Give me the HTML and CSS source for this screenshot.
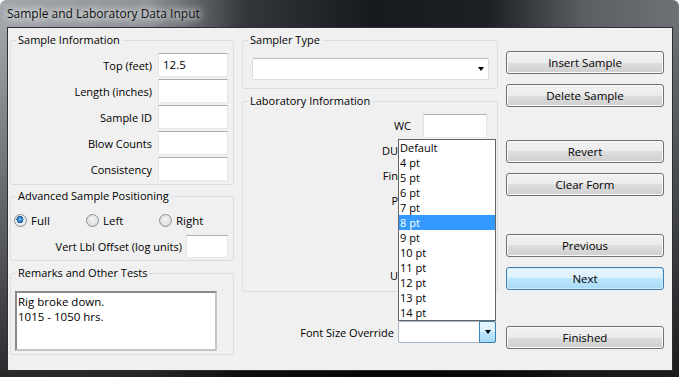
FILE: index.html
```html
<!DOCTYPE html>
<html lang="en">
<head>
    <meta charset="UTF-8">
    <title>Sample and Laboratory Data Input</title>
    <link rel="stylesheet" href="styles.css">
</head>
<body>

    <div class="window">
        <!-- Title bar -->
        <div class="titlebar">
            <span class="title">Sample and Laboratory Data Input</span>
        </div>

        <div class="client">

            <!-- Left column -->
            <div class="col col-left">
                <fieldset class="group group-sample">
                    <legend>Sample Information</legend>
                    <div class="field"><span class="lbl">Top (feet)</span><span class="text w70">12.5</span></div>
                    <div class="field"><span class="lbl">Length (inches)</span><span class="text w70"></span></div>
                    <div class="field"><span class="lbl">Sample ID</span><span class="text w70"></span></div>
                    <div class="field"><span class="lbl">Blow Counts</span><span class="text w70"></span></div>
                    <div class="field"><span class="lbl">Consistency</span><span class="text w70"></span></div>
                </fieldset>

                <fieldset class="group group-position">
                    <legend>Advanced Sample Positioning</legend>
                    <div class="radios">
                        <span class="radio-item"><span class="radio checked"></span>Full</span>
                        <span class="radio-item"><span class="radio"></span>Left</span>
                        <span class="radio-item"><span class="radio"></span>Right</span>
                    </div>
                    <div class="field field-offset"><span class="lbl">Vert Lbl Offset (log units)</span><span class="text w42"></span></div>
                </fieldset>

                <fieldset class="group group-remarks">
                    <legend>Remarks and Other Tests</legend>
                    <div class="memo">Rig broke down.<br>1015 - 1050 hrs.</div>
                </fieldset>
            </div>

            <!-- Middle column -->
            <div class="col col-mid">
                <fieldset class="group group-sampler">
                    <legend>Sampler Type</legend>
                    <div class="combo combo-sampler"><span class="arrow"></span></div>
                </fieldset>

                <fieldset class="group group-lab">
                    <legend>Laboratory Information</legend>
                    <div class="lab-row"><span class="lbl">WC</span><span class="text w64"></span></div>
                    <!-- rows below sit under the open list, only the start of each label shows -->
                    <div class="lab-row covered"><span class="lbl">DU</span><span class="text w64"></span></div>
                    <div class="lab-row covered"><span class="lbl">Fin</span><span class="text w64"></span></div>
                    <div class="lab-row covered"><span class="lbl">P</span><span class="text w64"></span></div>
                    <div class="lab-row covered"><span class="lbl"></span><span class="text w64"></span></div>
                    <div class="lab-row covered"><span class="lbl"></span><span class="text w64"></span></div>
                    <div class="lab-row covered"><span class="lbl">U</span><span class="text w64"></span></div>
                </fieldset>

                <div class="font-row">
                    <span class="lbl">Font Size Override</span>
                    <div class="combo combo-font">
                        <span class="combo-btn"><span class="arrow"></span></span>
                        <!-- Open drop-down list -->
                        <ul class="droplist">
                            <li>Default</li>
                            <li>4 pt</li>
                            <li>5 pt</li>
                            <li>6 pt</li>
                            <li>7 pt</li>
                            <li class="selected">8 pt</li>
                            <li>9 pt</li>
                            <li>10 pt</li>
                            <li>11 pt</li>
                            <li>12 pt</li>
                            <li>13 pt</li>
                            <li>14 pt</li>
                        </ul>
                    </div>
                </div>
            </div>

            <!-- Right column -->
            <div class="col col-right">
                <div class="btn">Insert Sample</div>
                <div class="btn">Delete Sample</div>
                <div class="btn gap-lg">Revert</div>
                <div class="btn">Clear Form</div>
                <div class="btn gap-xl">Previous</div>
                <div class="btn default">Next</div>
                <div class="btn gap-lg2">Finished</div>
            </div>

        </div>
    </div>

</body>
</html>
```

FILE: styles.css
```css
/* Page */
body {
    margin: 0;
    padding: 0;
    width: 679px;
    height: 377px;
    overflow: hidden;
    font-family: 'Open Sans', 'Noto Sans', sans-serif;
    font-size: 11px;
    color: #000;
}

/* Aero glass frame */
.window {
    width: 679px;
    height: 377px;
    display: flex;
    flex-direction: column;
    background:
        linear-gradient(to bottom, rgba(0, 0, 0, 0) 20px, rgba(0, 0, 0, 0.75) 100%),
        linear-gradient(to right, #a3a7ab 0, #8f9398 22%, #33363a 36%, #16191d 55%, #1d2024 72%, #5b5f64 86%, #6e7277 100%);
    border-radius: 6px 6px 0 0;
}

.titlebar {
    height: 27px;
    display: flex;
    align-items: center;
    padding-left: 7px;
    flex-shrink: 0;
}

.title {
    font-size: 12px;
    color: #101010;
    padding: 0 6px 1px 0;
    text-shadow: 0 0 6px rgba(255, 255, 255, 0.9), 0 0 10px rgba(255, 255, 255, 0.8), 0 0 14px rgba(255, 255, 255, 0.6);
}

/* Client area */
.client {
    flex: 1;
    margin: 0 6px 6px 7px;
    border: 1px solid #2c2f33;
    background-color: #f0f0f0;
    display: flex;
    padding-top: 4px;
}

.col {
    display: flex;
    flex-direction: column;
}

.col-left {
    width: 224px;
    margin-left: 2px;
}

.col-mid {
    width: 256px;
    margin-left: 8px;
}

.col-right {
    width: 158px;
    margin-left: 8px;
    padding-top: 19px;
}

/* Group boxes */
.group {
    margin: 0;
    border: 1px solid #d5dfe5;
    border-radius: 3px;
    min-width: 0;
}

.group legend {
    padding: 0 2px;
    margin-left: 5px;
    line-height: 16px;
    height: 16px;
}

.group-sample {
    padding: 5px 5px 3px 0;
    display: flex;
    flex-direction: column;
    gap: 2px;
}

.group-position {
    margin-top: 3px;
    padding: 8px 5px 2px 3px;
}

.group-position legend {
    margin-left: 2px;
}

.group-remarks {
    margin-top: 4px;
    padding: 10px 5px 3px 4px;
}

.group-remarks legend {
    margin-left: 1px;
}

.group-sampler {
    padding: 10px 7px 8px 9px;
}

.group-sampler legend {
    margin-left: -4px;
}

.group-lab {
    margin-top: 4px;
    padding: 4px 10px 3px 0;
}

/* Labelled fields */
.field {
    display: flex;
    justify-content: flex-end;
    align-items: center;
    gap: 6px;
}

.field-offset {
    margin-top: 7px;
    gap: 4px;
}

.lbl {
    white-space: nowrap;
}

.text {
    display: block;
    height: 24px;
    box-sizing: border-box;
    background-color: #fff;
    border: 1px solid #e2e3ea;
    border-top-color: #abadb3;
    border-bottom-color: #e3e9ef;
    padding: 3px 4px;
    line-height: 16px;
    font-size: 11.5px;
}

.w70 { width: 70px; }
.w42 { width: 42px; height: 23px; }
.w64 { width: 64px; }

/* Radio buttons */
.radios {
    display: grid;
    grid-template-columns: 72px 73px auto;
    height: 16px;
    align-items: center;
}

.radio-item {
    display: flex;
    align-items: center;
    gap: 4px;
    font-size: 11.5px;
}

.radio {
    width: 11px;
    height: 11px;
    border: 1px solid #8d8f92;
    border-radius: 50%;
    background: radial-gradient(circle at 50% 40%, #f6f6f6 0, #e2e2e2 55%, #cfd0d1 100%);
}

.radio.checked {
    background:
        radial-gradient(circle at 45% 40%, #a9dcff 0, #3e8fd6 1.5px, #1b5a98 3.5px, rgba(0, 0, 0, 0) 3.6px),
        radial-gradient(circle, #f6f6f6 0, #e0e0e0 100%);
}

/* Memo box */
.memo {
    width: 202px;
    height: 60px;
    box-sizing: border-box;
    background-color: #fff;
    border: 2px solid;
    border-color: #8a8a8a #c6c6c6 #c6c6c6 #8a8a8a;
    padding: 1px 1px;
    line-height: 15px;
    font-size: 11.5px;
}

/* Combo boxes */
.combo {
    position: relative;
    height: 22px;
    box-sizing: border-box;
    background-color: #fff;
    border: 1px solid #d9dde2;
    border-top-color: #b7bcc2;
    border-radius: 2px;
}

.combo-sampler {
    width: 237px;
}

.arrow {
    position: absolute;
    top: 8px;
    right: 4px;
    width: 0;
    height: 0;
    border-left: 3.5px solid transparent;
    border-right: 3.5px solid transparent;
    border-top: 4px solid #000;
}

.combo-font {
    width: 98px;
    border-color: #a9b8c6;
}

.combo-btn {
    position: absolute;
    top: -1px;
    right: -1px;
    width: 17px;
    height: 22px;
    box-sizing: border-box;
    border: 1px solid #3c7fb1;
    border-radius: 0 2px 2px 0;
    background: linear-gradient(#e8f5fd 0%, #d8effc 50%, #bde6fd 50%, #a6d9f4 100%);
}

.combo-btn .arrow {
    top: 8px;
    right: 4px;
}

/* Drop-down list */
.droplist {
    position: absolute;
    left: -1px;
    bottom: 100%;
    width: 98px;
    margin: 0 0 1px 0;
    padding: 0;
    list-style-type: none;
    background-color: #fff;
    border: 1px solid #646464;
    box-sizing: border-box;
}

.droplist li {
    height: 15px;
    line-height: 15px;
    padding-left: 1px;
    font-size: 11px;
}

.droplist li.selected {
    background-color: #3399ff;
    color: #fff;
}

/* Laboratory rows */
.lab-row {
    height: 25px;
    display: flex;
    justify-content: flex-end;
    align-items: center;
    gap: 12px;
}

/* labels end where the open list starts */
.lab-row.covered {
    gap: 25px;
}

.font-row {
    margin-top: 29px;
    display: flex;
    justify-content: flex-end;
    align-items: center;
    gap: 4px;
    padding-right: 2px;
}

/* Buttons */
.btn {
    height: 23px;
    box-sizing: border-box;
    margin-top: 10px;
    border: 1px solid #707070;
    border-radius: 3px;
    background: linear-gradient(#f2f2f2 0%, #ebebeb 50%, #dddddd 50%, #cfcfcf 100%);
    box-shadow: inset 0 0 0 1px #fbfbfb;
    display: flex;
    justify-content: center;
    align-items: center;
    font-size: 11.5px;
}

.btn:first-child {
    margin-top: 0;
}

.btn.gap-lg {
    margin-top: 33px;
}

.btn.gap-xl {
    margin-top: 38px;
}

.btn.gap-lg2 {
    margin-top: 36px;
}

.btn.default {
    border-color: #3c7fb1;
    background: linear-gradient(#eaf6fd 0%, #d9f0fc 50%, #bee6fd 50%, #a7d9f5 100%);
    box-shadow: inset 0 0 0 1px #d2ecfb;
}
```
